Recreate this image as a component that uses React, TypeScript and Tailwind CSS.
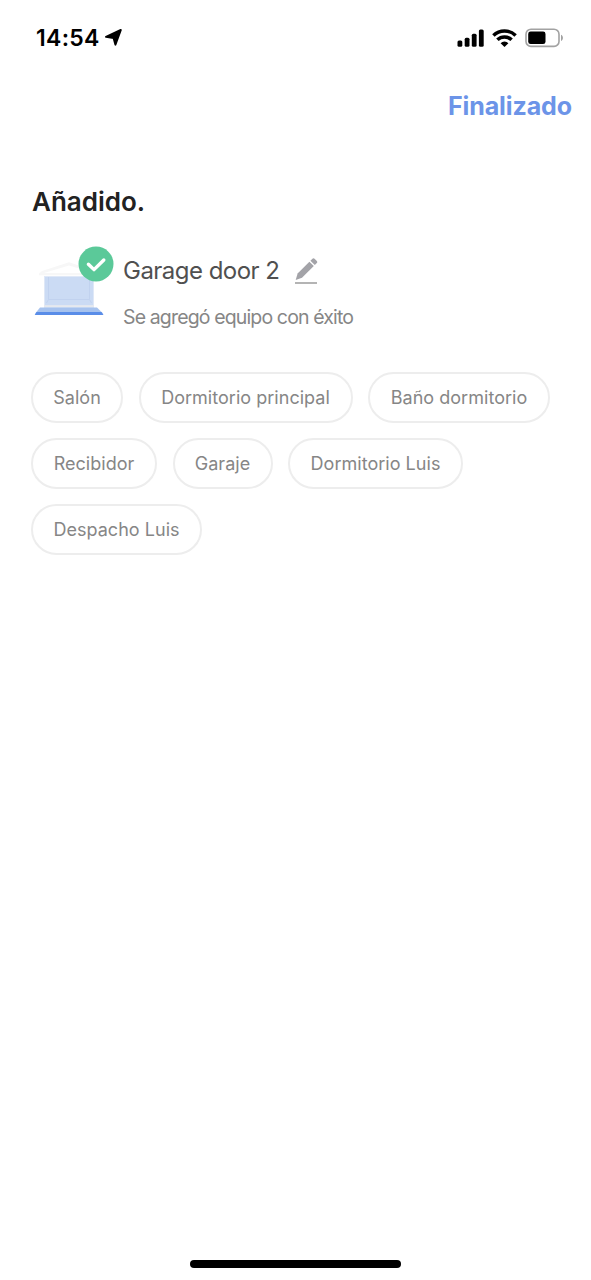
import React from "react";
import { clsx } from "clsx";

const rooms = [
  { name: "Salón", width: "w-[92px]" },
  { name: "Dormitorio principal", width: "w-[214px]" },
  { name: "Baño dormitorio", width: "w-[182px]" },
  { name: "Recibidor", width: "w-[126px]" },
  { name: "Garaje", width: "w-[100px]" },
  { name: "Dormitorio Luis", width: "w-[175px]" },
  { name: "Despacho Luis", width: "w-[171px]" },
];

function StatusBar() {
  return (
    <div className="flex h-[75px] items-center justify-between pl-9 pr-[27px] text-black">
      <div className="flex items-center gap-1">
        <span className="pt-[2px] text-[23px] font-semibold leading-none tracking-[0.3px]">14:54</span>
        <svg width="19" height="19" viewBox="0 0 19 19">
          <path d="M16.8 2 11.4 16.6 9.6 10 2 8.8 Z" fill="currentColor" stroke="currentColor" strokeWidth="2" strokeLinejoin="round" />
        </svg>
      </div>
      <div className="flex items-center">
        <svg width="27" height="18" viewBox="0 0 27 18" fill="currentColor">
          <rect x="0.5" y="11.5" width="4.8" height="6.2" rx="1.5" />
          <rect x="7.7" y="8.7" width="4.8" height="9" rx="1.5" />
          <rect x="14.8" y="4.7" width="4.8" height="13" rx="1.5" />
          <rect x="21.9" y="0.6" width="4.8" height="17.1" rx="1.5" />
        </svg>
        <svg className="ml-2" width="25" height="18" viewBox="0 0 25 18" fill="none" stroke="currentColor" strokeWidth="3.5">
          <path d="M1.4 6.4a16 16 0 0 1 22.2 0" />
          <path d="M5.4 10.8a10.2 10.2 0 0 1 14.2 0" />
          <path d="M12.5 17.9 8.6 14.2a5.4 5.4 0 0 1 7.8 0Z" fill="currentColor" stroke="none" />
        </svg>
        <svg className="ml-2" width="39" height="20" viewBox="0 0 39 20">
          <rect x="1" y="1.2" width="33" height="17.2" rx="5" fill="none" stroke="#a2a2a2" strokeWidth="1.6" />
          <rect x="3.2" y="3.5" width="17.3" height="12.6" rx="2.4" fill="#000" />
          <path d="M36 6.7c2.6 1 2.6 5.2 0 6.2Z" fill="#a2a2a2" />
        </svg>
      </div>
    </div>
  );
}

function GarageIcon() {
  return (
    <svg className="shrink-0" width="84" height="74" viewBox="1 0 84 74">
      <path d="M9 28.6 12 26 39 17.2 66 26 69 28.6v1.6H9Z" fill="#f7f7f7" />
      <path d="M14 28 39 20.4 64 28Z" fill="#fff" />
      <rect x="14" y="31" width="50" height="32" fill="#dfe8f7" />
      <rect x="15" y="32" width="48" height="28.5" fill="#cbdbf4" />
      <path d="M18.5 32v22.5l-2 3.5M59.5 32v22.5l2 3.5M18.5 54.5h41" fill="none" stroke="#c1d2ef" strokeWidth="1" />
      <path d="M14 60.2h50v1.8H14Z" fill="#e6e9ee" />
      <path d="M10 62.5h57l6.3 6.3H5Z" fill="#a6c2ee" />
      <path d="M6.5 67h65l2 3H4.7Z" fill="#5a8de8" />
      <circle cx="66" cy="19" r="17.5" fill="#5bc999" />
      <path d="m58.4 19.2 5.6 5.4 9.8-9.6" fill="none" stroke="#fff" strokeWidth="3.4" strokeLinecap="round" strokeLinejoin="round" />
    </svg>
  );
}

function EditIcon() {
  return (
    <svg className="mt-[3px]" width="24" height="28" viewBox="0 0 24 28" fill="#a3a3a8">
      <path d="M1.7 21.9 3.6 15.4 15.4 3.8 19.8 8.1 8 19.8Z" />
      <path d="m16.4 2.8 1.8-1.8a1.8 1.8 0 0 1 2.6 0l1.8 1.7a1.8 1.8 0 0 1 0 2.6L20.8 7.1Z" />
      <rect x="1" y="24" width="22" height="2" fill="#b4b4b4" />
    </svg>
  );
}

export default function App() {
  return (
    <div className="flex h-[1280px] w-[591px] flex-col bg-white font-['Inter',sans-serif]">
      <StatusBar />

      <div className="flex h-[61px] items-center justify-end pr-[19px]">
        <button className="pt-px text-[25px] font-bold leading-none tracking-[-0.1px] text-[#6c94e8]">Finalizado</button>
      </div>

      <main className="flex-1 px-[31px]">
        <h1 className="ml-px mt-[50px] text-[26px] font-semibold leading-[32px] text-[#222]">Añadido.</h1>

        <section className="mt-[27px] flex">
          <GarageIcon />
          <div className="ml-2">
            <div className="flex h-[50px] items-center gap-[15px]">
              <h2 className="whitespace-nowrap pt-px text-[24px] leading-none tracking-[-0.53px] text-[#505050]">Garage door 2</h2>
              <EditIcon />
            </div>
            <p className="mt-[11px] whitespace-nowrap text-[19.5px] leading-[22px] tracking-[-0.86px] text-[#868686]">
              Se agregó equipo con éxito
            </p>
          </div>
        </section>

        <div className="-mr-2 mt-[44px] flex flex-wrap gap-x-[15.5px] gap-y-[15px]">
          {rooms.map(({ name, width }) => (
            <button
              key={name}
              className={clsx(
                "h-[51px] whitespace-nowrap rounded-full border-2 border-[#ededed] pt-px text-[18px] leading-none tracking-[0.03px] text-[#868686]",
                width
              )}
            >
              {name}
            </button>
          ))}
        </div>
      </main>

      <div className="flex h-5 justify-center">
        <div className="h-2 w-[211px] rounded-full bg-black" />
      </div>
    </div>
  );
}
